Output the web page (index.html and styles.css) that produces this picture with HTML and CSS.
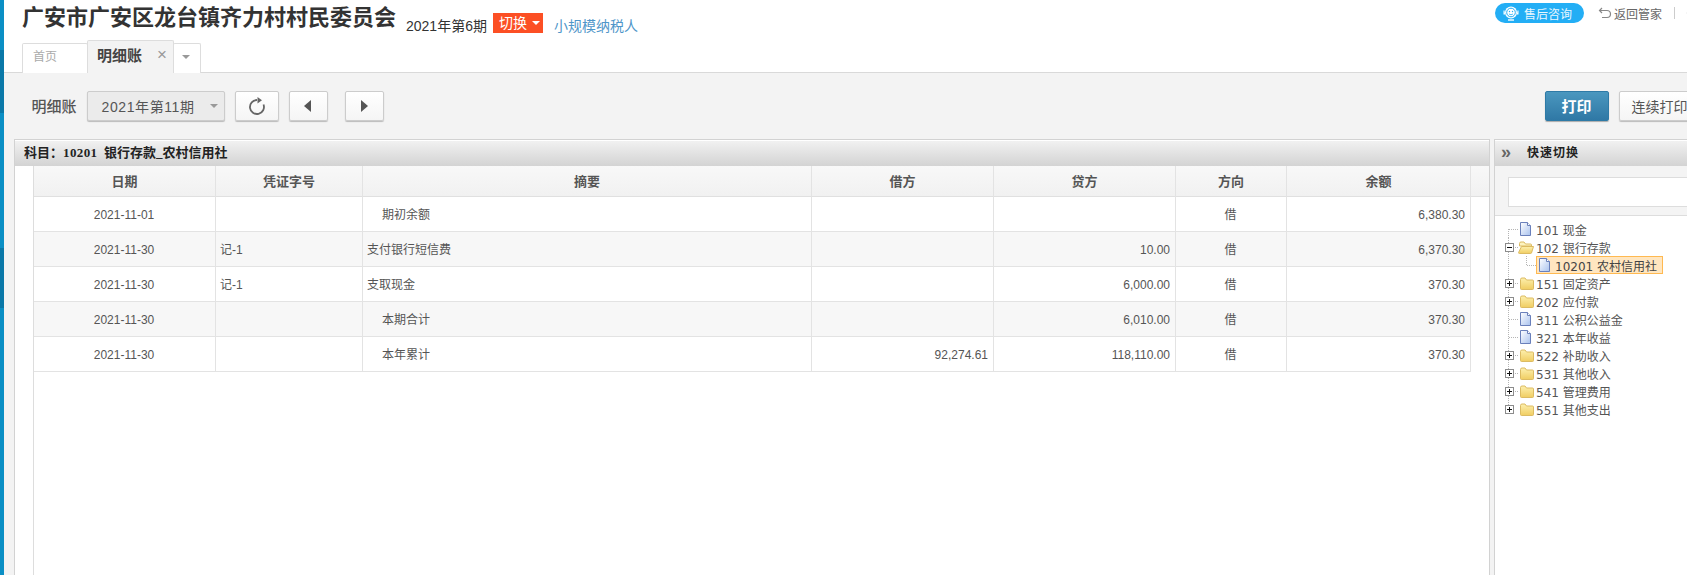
FILE: index.html
```html
<!DOCTYPE html>
<html lang="zh-CN">
<head>
<meta charset="utf-8">
<title>明细账</title>
<link rel="stylesheet" href="styles.css">
</head>
<body>
<div class="app">
  <div class="strip"></div>
  <div class="main">
    <header class="header">
      <div class="topline">
        <h1 class="company">广安市广安区龙台镇齐力村村民委员会</h1>
        <span class="period">2021年第6期</span>
        <span class="switch">切换<i class="caret caret-white"></i></span>
        <a class="taxtype">小规模纳税人</a>
        <div class="actions">
          <span class="pill">
            <svg class="pill-icon" width="18" height="18" viewBox="0 0 18 18"><circle cx="9" cy="8.500" r="6" fill="#fff"/><path d="M2.500 6.500h-1v4h1.600zM15.500 6.500h1v4h-1.600z" fill="#fff"/><circle cx="9" cy="8.500" r="4.300" fill="none" stroke="#23aef5"/><circle cx="7.500" cy="7.500" r=".7" fill="#23aef5"/><circle cx="10.500" cy="7.500" r=".7" fill="#23aef5"/><path d="M7 10q2 1.500 4 0" fill="none" stroke="#23aef5" stroke-width=".8"/><path d="M6 16h6" stroke="#fff" stroke-width="1.400"/></svg>
            售后咨询
          </span>
          <span class="back">
            <svg width="14" height="14" viewBox="0 0 14 14"><path d="M4 2 1.500 4.500 4 7M2 4.500h7a3.500 3.500 0 0 1 0 7H4" fill="none" stroke="#888" stroke-width="1.200"/></svg>
            返回管家
          </span>
          <span class="vsep"></span>
          <svg class="more" width="14" height="14" viewBox="0 0 14 14"><circle cx="7" cy="7" r="5.500" fill="none" stroke="#888" stroke-width="1.200"/></svg>
        </div>
      </div>
      <nav class="tabs">
        <span class="tab">首页</span>
        <span class="tab tab-active">明细账<i class="close">×</i></span>
        <span class="tab tab-menu"><i class="caret caret-gray"></i></span>
      </nav>
    </header>

    <section class="toolbar">
      <span class="toolbar-label">明细账</span>
      <span class="select"><span class="select-text">2021年第11期</span><i class="caret caret-gray"></i></span>
      <button class="btn btn-refresh"><svg width="20" height="20" viewBox="0 0 20 20"><path d="M10 4A7 7 0 1 0 16.500 8.500" fill="none" stroke="#666" stroke-width="1.800"/><path d="M10.500 1 15 4.200 10.500 7.500z" fill="#666"/></svg></button>
      <button class="btn btn-nav"><svg width="8" height="12" viewBox="0 0 8 12"><path d="M7 0v12L0 6z" fill="#555"/></svg></button>
      <button class="btn btn-nav btn-next"><svg width="8" height="12" viewBox="0 0 8 12"><path d="M1 0v12l7-6z" fill="#555"/></svg></button>
      <span class="toolbar-space"></span>
      <button class="btn-print">打印</button>
      <button class="btn btn-cont">连续打印</button>
    </section>

    <section class="workspace">
      <div class="panel panel-ledger">
        <div class="panel-head"><span class="ledger-title">科目：<span class="ledger-code">10201</span>&nbsp; 银行存款_农村信用社</span></div>
        <div class="ledger-body">
          <table class="ledger ledger-headtable">
            <colgroup><col class="c1"><col class="c2"><col class="c3"><col class="c4"><col class="c5"><col class="c6"><col class="c7"><col></colgroup>
            <thead><tr><th>日期</th><th>凭证字号</th><th>摘要</th><th>借方</th><th>贷方</th><th>方向</th><th>余额</th><th></th></tr></thead>
          </table>
          <table class="ledger ledger-rows">
            <colgroup><col class="c1"><col class="c2"><col class="c3"><col class="c4"><col class="c5"><col class="c6"><col class="c7"></colgroup>
            <tbody>
              <tr><td class="ctr">2021-11-01</td><td></td><td class="ind">期初余额</td><td class="num"></td><td class="num"></td><td class="ctr">借</td><td class="num">6,380.30</td></tr>
              <tr><td class="ctr">2021-11-30</td><td>记-1</td><td>支付银行短信费</td><td class="num"></td><td class="num">10.00</td><td class="ctr">借</td><td class="num">6,370.30</td></tr>
              <tr><td class="ctr">2021-11-30</td><td>记-1</td><td>支取现金</td><td class="num"></td><td class="num">6,000.00</td><td class="ctr">借</td><td class="num">370.30</td></tr>
              <tr><td class="ctr">2021-11-30</td><td></td><td class="ind">本期合计</td><td class="num"></td><td class="num">6,010.00</td><td class="ctr">借</td><td class="num">370.30</td></tr>
              <tr><td class="ctr">2021-11-30</td><td></td><td class="ind">本年累计</td><td class="num">92,274.61</td><td class="num">118,110.00</td><td class="ctr">借</td><td class="num">370.30</td></tr>
            </tbody>
          </table>
        </div>
      </div>

      <aside class="panel panel-quick">
        <div class="panel-head quick-head"><span class="chev">»</span><span class="quick-title">快速切换</span></div>
        <div class="quick-search"><div class="quick-input"></div></div>
        <svg class="defs" width="0" height="0">
          <defs>
            <linearGradient id="pg" x1="0" y1="0" x2="1" y2="1"><stop offset="0" stop-color="#fff"/><stop offset="1" stop-color="#a9c2ee"/></linearGradient>
            <linearGradient id="fg" x1="0" y1="0" x2="0" y2="1"><stop offset="0" stop-color="#fdf0ae"/><stop offset="1" stop-color="#f0cd62"/></linearGradient>
            <symbol id="page" viewBox="0 0 13 14"><path d="M1.500.5h7l3 3v10h-10z" fill="url(#pg)" stroke="#6a80bb"/><path d="M8.500.5v3h3" fill="#fff" stroke="#6a80bb"/></symbol>
            <symbol id="folder" viewBox="0 0 14 13"><path d="M.5 2.500q0-1.500 1.500-1.500h3l1.500 2h6q1 0 1 1v7.500q0 1-1 1h-11q-1 0-1-1z" fill="url(#fg)" stroke="#dcbb62"/></symbol>
            <symbol id="folder-open" viewBox="0 0 16 13"><path d="M1.500 2.500q0-1.500 1.500-1.500h3l1.500 2h5q1 0 1 1v1h-12z" fill="#fdf3c0" stroke="#dcbb62"/><path d="M3.500 5.500h12l-2 6.500q-.2.500-1 .5h-11q-1 0-1-.8z" fill="url(#fg)" stroke="#dcbb62"/></symbol>
            <symbol id="plus" viewBox="0 0 9 9"><rect x=".5" y=".5" width="8" height="8" fill="#fff" stroke="#8c8c8c"/><path d="M2 4.500h5M4.500 2v5" stroke="#111"/></symbol>
            <symbol id="minus" viewBox="0 0 9 9"><rect x=".5" y=".5" width="8" height="8" fill="#fff" stroke="#8c8c8c"/><path d="M2 4.500h5" stroke="#111"/></symbol>
          </defs>
        </svg>
        <ul class="tree">
          <li class="node first"><span class="sw"></span><svg class="ic ic-page"><use href="#page"/></svg><span class="lbl">101 现金</span></li>
          <li class="node"><span class="sw"><svg class="box"><use href="#minus"/></svg></span><svg class="ic ic-open"><use href="#folder-open"/></svg><span class="lbl">102 银行存款</span></li>
          <li class="node child"><span class="sw sw-through"></span><span class="sw sw-sub"></span><span class="sel"><svg class="ic ic-page"><use href="#page"/></svg><span class="lbl">10201 农村信用社</span></span></li>
          <li class="node"><span class="sw"><svg class="box"><use href="#plus"/></svg></span><svg class="ic ic-folder"><use href="#folder"/></svg><span class="lbl">151 固定资产</span></li>
          <li class="node"><span class="sw"><svg class="box"><use href="#plus"/></svg></span><svg class="ic ic-folder"><use href="#folder"/></svg><span class="lbl">202 应付款</span></li>
          <li class="node"><span class="sw"></span><svg class="ic ic-page"><use href="#page"/></svg><span class="lbl">311 公积公益金</span></li>
          <li class="node"><span class="sw"></span><svg class="ic ic-page"><use href="#page"/></svg><span class="lbl">321 本年收益</span></li>
          <li class="node"><span class="sw"><svg class="box"><use href="#plus"/></svg></span><svg class="ic ic-folder"><use href="#folder"/></svg><span class="lbl">522 补助收入</span></li>
          <li class="node"><span class="sw"><svg class="box"><use href="#plus"/></svg></span><svg class="ic ic-folder"><use href="#folder"/></svg><span class="lbl">531 其他收入</span></li>
          <li class="node"><span class="sw"><svg class="box"><use href="#plus"/></svg></span><svg class="ic ic-folder"><use href="#folder"/></svg><span class="lbl">541 管理费用</span></li>
          <li class="node last"><span class="sw"><svg class="box"><use href="#plus"/></svg></span><svg class="ic ic-folder"><use href="#folder"/></svg><span class="lbl">551 其他支出</span></li>
        </ul>
      </aside>
    </section>
  </div>
</div>
</body>
</html>
```

FILE: styles.css
```css
* { box-sizing: border-box; }
html, body { margin: 0; padding: 0; height: 100%; overflow: hidden; background: #f3f3f3; }
body { font-family: "Liberation Sans", "Noto Sans CJK SC", sans-serif; font-size: 12px; color: #555; }

.app { display: flex; width: 1800px; height: 575px; overflow: hidden; }
.strip {
  flex: 0 0 4px;
  background: linear-gradient(to bottom,
    #0b8fc5 0 50px, #0a78a8 50px 113px, #0b8fc5 113px 248px,
    #0a78a8 248px 308px, #0b8fc5 308px);
}
.main { flex: 1; display: flex; flex-direction: column; min-width: 0; }

/* header */
.header { height: 73px; background: #fff; border-bottom: 1px solid #d9d9d9; padding-left: 18px; display: flex; flex-direction: column; }
.topline { display: flex; align-items: flex-start; height: 41px; }
.company { margin: 6px 0 0; font-size: 22px; line-height: 23px; font-weight: 700; color: #333; white-space: nowrap; }
.period { margin: 17px 0 0 10px; font-size: 14px; line-height: 18px; color: #333; }
.switch { margin: 13px 0 0 6px; width: 50px; height: 20px; background: #fc4f24; color: #fff; font-size: 14px; line-height: 19px; padding-left: 6px; display: flex; align-items: center; gap: 5px; }
.taxtype { margin: 17px 0 0 11px; font-size: 14px; line-height: 18px; color: #4f96c9; }
.actions { display: flex; align-items: center; margin: 3px 0 0 857px; height: 20px; }
.pill { width: 89px; height: 20px; border-radius: 10px; background: #23aef5; color: #e9f7ff; display: flex; align-items: center; padding-left: 7px; gap: 4px; font-size: 12px; }
.back { margin-left: 14px; display: flex; align-items: center; gap: 2px; color: #666; font-size: 12px; }
.vsep { width: 1px; height: 12px; background: #ccc; margin-left: 12px; }
.more { margin-left: 11px; }

.tabs { display: flex; align-items: flex-end; height: 31px; }
.tab { height: 30px; width: 66px; background: #fff; border: 1px solid #ddd; border-bottom: 0; border-radius: 2px 2px 0 0; color: #aaa; font-size: 12px; line-height: 16px; padding: 5px 0 0 10px; margin-bottom: -1px; }
.tab-active { width: 87px; height: 33px; margin-left: -1px; background: #f3f3f3; color: #444; font-size: 15px; line-height: 20px; font-weight: 700; padding: 5px 0 0 9px; position: relative; z-index: 1; display: flex; }
.close { font-style: normal; font-weight: 400; font-size: 17px; color: #999; margin-left: 15px; line-height: 18px; }
.tab-menu { width: 28px; margin-left: -1px; padding: 11px 0 0 8px; display: flex; }

.caret { display: inline-block; width: 0; height: 0; border-left: 4px solid transparent; border-right: 4px solid transparent; }
.caret-white { border-top: 4px solid #fff; }
.caret-gray { border-top: 4px solid #999; }

/* toolbar */
.toolbar { height: 66px; display: flex; align-items: center; padding: 0 0 1px 27.500px; flex: none; }
.toolbar-label { width: 55px; font-size: 15px; font-weight: 500; color: #555; white-space: nowrap; }
.select { width: 138px; height: 30px; background: #ebebeb; border: 1px solid #ccc; border-radius: 2px; box-shadow: 0 1px 1px #bbb; color: #555; font-size: 14px; padding-left: 14px; display: flex; align-items: center; justify-content: space-between; padding-right: 6px; }
.select-text { letter-spacing: .6px; }
.btn { height: 30px; background: linear-gradient(#fff, #f5f5f5); border: 1px solid #ccc; border-radius: 2px; box-shadow: 0 1px 1px #bbb; padding: 0; display: flex; align-items: center; justify-content: center; font-family: inherit; color: #555; }
.btn-refresh { width: 44px; margin-left: 10px; }
.btn-nav { width: 39px; margin-left: 10px; }
.btn-next { margin-left: 17px; }
.toolbar-space { width: 1161px; flex: none; }
.btn-print { width: 64px; height: 30px; background: linear-gradient(#4a97bf, #2f78a5); border: 1px solid #2e7aa6; border-radius: 2px; box-shadow: 0 1px 1px #aaa; color: #fff; font-family: inherit; font-size: 15px; font-weight: 700; padding: 0; }
.btn-cont { width: 82px; margin-left: 10px; font-size: 14px; white-space: nowrap; }

/* workspace */
.workspace { flex: 1; display: flex; align-items: stretch; padding-left: 10px; gap: 4px; min-height: 0; }
.panel { background: #fff; border: 1px solid #d2d2d2; border-bottom: 0; display: flex; flex-direction: column; flex: none; }
.panel-ledger { width: 1476px; }
.panel-quick { width: 300px; }
.panel-head { height: 25px; flex: none; margin-top: 1px; padding-bottom: 4px; background: linear-gradient(#f1f1f1, #d3d3d3); display: flex; align-items: center; }
.ledger-title { padding-left: 9px; font-family: "Liberation Serif", "Noto Sans CJK SC", serif; font-size: 13px; font-weight: 700; color: #222; white-space: pre; }
.ledger-code { letter-spacing: .4px; }
.ledger-body { flex: 1; margin-left: 18px; border-left: 1px solid #ddd; min-height: 0; }
.ledger { border-collapse: separate; border-spacing: 0; table-layout: fixed; }
.ledger-headtable { width: 100%; }
.ledger-rows { width: 1437px; }
.c1 { width: 182px; } .c2 { width: 147px; } .c3 { width: 449px; } .c4 { width: 182px; }
.c5 { width: 182px; } .c6 { width: 111px; } .c7 { width: 184px; }
.ledger th { height: 31px; padding: 0 0 2px; background: linear-gradient(#f8f8f8, #f1f1f1); border-right: 1px solid #e3e3e3; border-bottom: 1px solid #e0e0e0; font-size: 13px; font-weight: 700; color: #555; }
.ledger th:last-child { border-right: 0; }
.ledger td { height: 35px; padding: 2px 5px 0 4px; border-right: 1px solid #e3e3e3; border-bottom: 1px solid #e3e3e3; font-size: 12px; line-height: 16px; color: #555; white-space: nowrap; }
.ledger tbody tr:nth-child(even) td { background: #f7f7f7; }
.ledger .ctr { text-align: center; }
.ledger .num { text-align: right; }
.ledger .ind { padding-left: 19px; }

/* quick switch */
.quick-head { color: #222; }
.chev { width: 24px; padding-left: 6px; font-size: 18px; line-height: 20px; font-weight: 700; color: #666; }
.quick-title { padding-left: 8px; font-size: 12px; font-weight: 700; letter-spacing: 1px; color: #222; }
.quick-search { height: 50px; flex: none; background: #f4f4f4; border-bottom: 1px solid #ddd; padding: 11px 0 0 13px; }
.quick-input { width: 280px; height: 30px; background: #fff; border: 1px solid #ddd; }
.defs { display: block; }

.tree { list-style: none; margin: 0; padding: 4px 0 0 5px; font-family: "DejaVu Sans", "Noto Sans CJK SC", sans-serif; font-size: 12px; color: #555; }
.node { display: flex; align-items: center; height: 18px; }
.sw {
  flex: 0 0 18px; height: 18px; display: flex; align-items: center; padding-left: 5px;
  background:
    repeating-linear-gradient(to bottom, #b5b5b5 0 1px, transparent 1px 2px) 8px 0 / 1px 100% no-repeat,
    repeating-linear-gradient(to right, #b5b5b5 0 1px, transparent 1px 2px) 9px 9px / 9px 1px no-repeat;
}
.first .sw { background: repeating-linear-gradient(to bottom, #b5b5b5 0 1px, transparent 1px 2px) 8px 9px / 1px 9px no-repeat, repeating-linear-gradient(to right, #b5b5b5 0 1px, transparent 1px 2px) 9px 9px / 9px 1px no-repeat; }
.last .sw { background: repeating-linear-gradient(to bottom, #b5b5b5 0 1px, transparent 1px 2px) 8px 0 / 1px 9px no-repeat; }
.sw-through { background: repeating-linear-gradient(to bottom, #b5b5b5 0 1px, transparent 1px 2px) 8px 0 / 1px 100% no-repeat; }
.sw-sub { background: repeating-linear-gradient(to bottom, #b5b5b5 0 1px, transparent 1px 2px) 8px 0 / 1px 9px no-repeat, repeating-linear-gradient(to right, #b5b5b5 0 1px, transparent 1px 2px) 9px 9px / 9px 1px no-repeat; }
.box { width: 9px; height: 9px; display: block; }
.ic { flex: none; display: block; }
.ic-page { width: 13px; height: 14px; margin: 0 4px 0 1px; }
.ic-folder { width: 14px; height: 13px; margin: 0 2px 0 2px; }
.ic-open { width: 16px; height: 13px; margin: 0 2px 0 0; }
.lbl { white-space: nowrap; }
.sel { display: flex; align-items: center; height: 18px; width: 127px; background: #ffe6c0; border: 1px solid #ffb951; color: #444; }
.sel .ic-page { margin: 0 4px 0 1px; }
.sel .lbl { color: #444; }
```
